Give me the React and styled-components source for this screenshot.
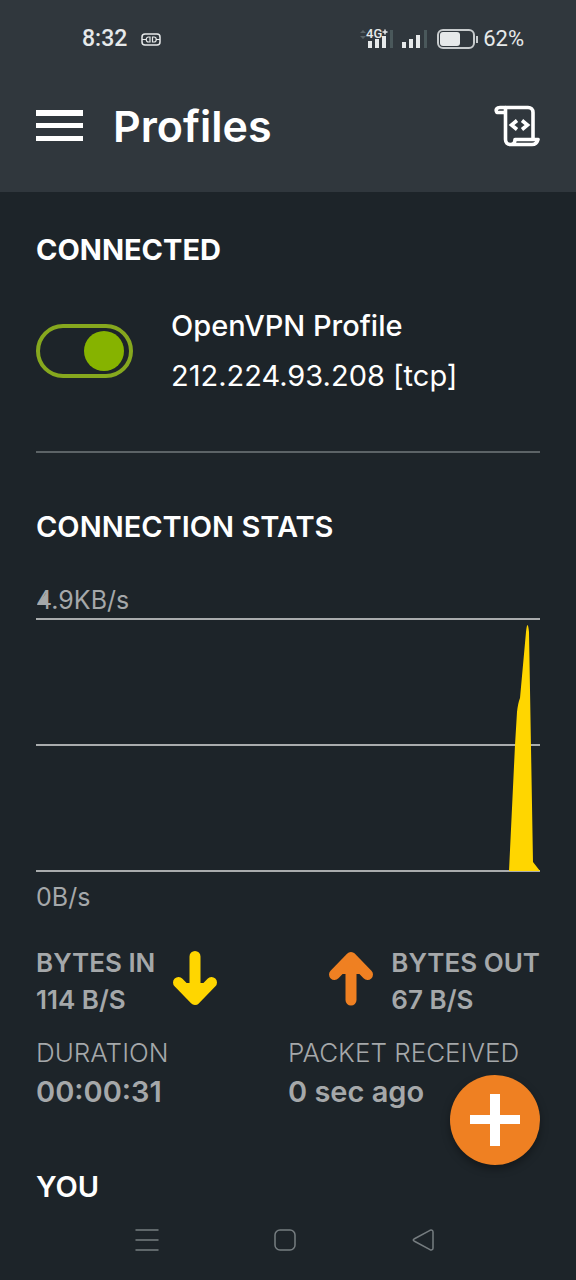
import React, { useState } from 'react';
import styled, { createGlobalStyle } from 'styled-components';

const GlobalStyle = createGlobalStyle`
    * {
        box-sizing: border-box;
    }

    body {
        margin: 0;
        background: #1d2429;
        font-family: Inter, 'Liberation Sans', sans-serif;
    }
`;

const Page = styled.div`
    position: relative;
    display: flex;
    flex-direction: column;
    min-height: 100vh;
    background: #1d2429;
    color: #ffffff;
`;

const Header = styled.header`
    background: #30373d;
    padding-bottom: 18px;
`;

const StatusBar = styled.div`
    display: flex;
    align-items: center;
    justify-content: space-between;
    height: 78px;
    padding: 0 52px 0 82px;
    color: #e6e9ea;
    font-family: Roboto, 'Liberation Sans', sans-serif;
    font-size: 22px;
    line-height: 28px;
`;

const StatusGroup = styled.div`
    display: flex;
    align-items: center;
    gap: ${props => props.$gap}px;
`;

const Time = styled.span`
    font-size: 23px;
    font-weight: 500;
`;

const SignalIcons = styled.svg`
    display: block;
    width: 120px;
    height: 28px;
`;

const AppBar = styled.div`
    display: flex;
    align-items: center;
    height: 96px;
    padding: 0 36px;
`;

const IconButton = styled.button`
    display: flex;
    padding: 0;
    border: none;
    background: none;
    color: inherit;
    cursor: pointer;
`;

const Title = styled.h1`
    flex: 1;
    margin: 0 0 0 30px;
    font-size: 43px;
    font-weight: 600;
    line-height: 52px;
`;

const Content = styled.main`
    padding: 40px 36px 0;
`;

const Heading = styled.h2`
    margin: 0;
    font-size: 29px;
    font-weight: ${props => props.$weight || 600};
    line-height: 36px;
`;

const Profile = styled.section`
    display: flex;
    align-items: center;
    gap: 38px;
    padding: 33px 0 50px;
    margin-bottom: 56px;
    border-bottom: 2px solid #5c6366;
`;

const Toggle = styled.input`
    appearance: none;
    display: flex;
    align-items: center;
    justify-content: ${props => (props.checked ? 'flex-end' : 'flex-start')};
    width: 97px;
    height: 54px;
    margin: 0;
    padding: 0 5px;
    border: 4px solid #86a81e;
    border-radius: 27px;
    cursor: pointer;

    &::before {
        content: '';
        width: 40px;
        height: 40px;
        border-radius: 50%;
        background: #86b300;
    }
`;

const ProfileLabel = styled.label`
    font-size: 29px;
    line-height: 50px;
`;

const ProfileName = styled.span`
    display: block;
    font-weight: 500;
`;

const AxisLabel = styled.div`
    position: relative;
    margin-top: ${props => props.$top || 0}px;
    color: #a5a8aa;
    font-size: 25px;
    line-height: 32px;
`;

const AxisMarker = styled.svg`
    position: absolute;
    left: 0;
    top: 6px;
    width: 14px;
    height: 18px;
`;

const Chart = styled.div`
    display: flex;
    margin: 2px 0 9px;
`;

const ChartArea = styled.svg`
    display: block;
    width: 100%;
    height: 254px;
`;

const Rates = styled.div`
    display: flex;
    justify-content: space-between;
    margin: 31px 0 15px;
`;

const Rate = styled.div`
    display: flex;
    align-items: center;
    gap: 18px;
    color: #a5a8aa;
    font-size: 26px;
    font-weight: 600;
    line-height: 37px;
`;

const Details = styled.dl`
    display: grid;
    grid-template-columns: 1fr 1fr;
    margin: 0 0 58px;
    color: #a5a8aa;
`;

const Term = styled.dt`
    font-size: 26px;
    font-weight: 300;
    line-height: 40px;
`;

const Value = styled.dd`
    margin: 0;
    font-size: 29px;
    font-weight: 600;
    line-height: 38px;
`;

const AddButton = styled.button`
    position: absolute;
    right: 36px;
    bottom: 115px;
    display: flex;
    align-items: center;
    justify-content: center;
    width: 90px;
    height: 90px;
    padding: 0;
    border: none;
    border-radius: 50%;
    background: #ef8022;
    box-shadow: 0 4px 8px rgba(0, 0, 0, 0.35);
    cursor: pointer;
`;

const NavBar = styled.nav`
    display: flex;
    align-items: center;
    justify-content: center;
    gap: 114px;
    height: 74px;
    margin-top: auto;
    padding: 0 6px 6px 0;
    color: #767d80;
`;

const VpnIcon = () => (
    <svg width="20" height="13" viewBox="0 0 20 13" fill="none" stroke="currentColor">
        <rect x="1" y="1" width="18" height="11" rx="3" strokeWidth="1.5" />
        <path d="M1 6.500h4M15 6.500h4M9 4H7.500C4.500 4 4.500 9 7.500 9H9zM11.500 4H13c3 0 3 5 0 5h-1.500z" strokeWidth="1.200" />
    </svg>
);

const ScrollIcon = () => (
    <svg width="46" height="42" viewBox="0 0 46 42" fill="none" stroke="currentColor" strokeWidth="3.600" strokeLinejoin="round">
        <path d="M11.500 2.500H34c3 0 5 2 5 5v26" />
        <path d="M11.500 2.500v32c0 3 2 5 5 5H38c3 0 5-1.500 6-5H21c0 3-1.500 5-4.500 5" />
        <path d="M11.500 7.500H3c-2-3 0-5 3-5h6" />
        <path d="M23 15.500L17.500 20l5.500 4.500M28 15.500l5.500 4.500-5.500 4.500" strokeWidth="3.600" strokeLinejoin="miter" />
    </svg>
);

const Arrow = ({ up, color }) => (
    <svg width="44" height="60" viewBox="0 0 44 60" fill="none" stroke={color} strokeWidth="11" strokeLinecap="round" strokeLinejoin="round">
        <path d={up ? 'M22 49V10M5.500 23.500L22 6.500l16.500 17' : 'M22 5.500V45M5.500 31.500L22 48.500l16.500-17'} />
        <path d={up ? 'M13 22l9-9 9 9z' : 'M13 33l9 9 9-9z'} fill={color} strokeWidth="2" />
    </svg>
);

const App = () => {
    const [connected, setConnected] = useState(true);

    return (
        <Page>
            <GlobalStyle />
            <Header>
                <StatusBar>
                    <StatusGroup $gap={14}>
                        <Time>8:32</Time>
                        <VpnIcon />
                    </StatusGroup>
                    <StatusGroup $gap={4}>
                        <SignalIcons viewBox="0 0 120 28">
                            <path d="M1 8l3-3 3 3zM1 11l3 3 3-3z" fill="#586266" />
                            <text x="7" y="13" fontSize="13" fontWeight="500" fill="#e6e9ea">4G</text>
                            <path d="M23.500 7h5M26 4.500v5" stroke="#e6e9ea" strokeWidth="1.500" />
                            <path d="M9 16h4v7H9zM16 14h4v9h-4zM23 11h4v12h-4zM43 17h4v6h-4zM50 14h4v9h-4zM57 10h4v13h-4z" fill="#e6e9ea" />
                            <path d="M31 5h3v18h-3zM65 5h3v18h-3z" fill="#4a585b" />
                            <rect x="79" y="5" width="36" height="18" rx="5" fill="none" stroke="#c7cbcd" strokeWidth="2" />
                            <rect x="81" y="7" width="20" height="14" rx="3" fill="#e6e9ea" />
                            <path d="M118 11v7" stroke="#c7cbcd" strokeWidth="2" />
                        </SignalIcons>
                        <span>62%</span>
                    </StatusGroup>
                </StatusBar>
                <AppBar>
                    <IconButton aria-label="Menu">
                        <svg width="47" height="32" viewBox="0 0 47 32" fill="currentColor">
                            <path d="M0 0h47v6H0zM0 13h47v5H0zM0 26h47v5H0z" />
                        </svg>
                    </IconButton>
                    <Title>Profiles</Title>
                    <IconButton aria-label="Log">
                        <ScrollIcon />
                    </IconButton>
                </AppBar>
            </Header>

            <Content>
                <Heading $weight={700}>CONNECTED</Heading>
                <Profile>
                    <Toggle
                        type="checkbox"
                        id="profile"
                        checked={connected}
                        onChange={() => setConnected(!connected)}
                    />
                    <ProfileLabel htmlFor="profile">
                        <ProfileName>OpenVPN Profile</ProfileName>
                        212.224.93.208 [tcp]
                    </ProfileLabel>
                </Profile>

                <Heading>CONNECTION STATS</Heading>
                <AxisLabel $top={39}>
                    4.9KB/s
                    <AxisMarker viewBox="0 0 14 18">
                        <path d="M1 15L11 2v13z" fill="#a5a8aa" />
                    </AxisMarker>
                </AxisLabel>
                <Chart>
                    <ChartArea viewBox="0 0 504 254" preserveAspectRatio="none">
                        <path d="M0 1h504M0 127h504M0 253h504" stroke="#a9acad" strokeWidth="2" />
                        <path d="M473 253L479 127L481 94Q482 85 484 80L490 14Q491.500 0 493 14L497 244L504 253z" fill="#ffd600" />
                    </ChartArea>
                </Chart>
                <AxisLabel>0B/s</AxisLabel>

                <Rates>
                    <Rate>
                        <div>
                            <div>BYTES IN</div>
                            <div>114 B/S</div>
                        </div>
                        <Arrow color="#ffd600" />
                    </Rate>
                    <Rate>
                        <Arrow up color="#ef8022" />
                        <div>
                            <div>BYTES OUT</div>
                            <div>67 B/S</div>
                        </div>
                    </Rate>
                </Rates>

                <Details>
                    <div>
                        <Term>DURATION</Term>
                        <Value>00:00:31</Value>
                    </div>
                    <div>
                        <Term>PACKET RECEIVED</Term>
                        <Value>0 sec ago</Value>
                    </div>
                </Details>

                <Heading>YOU</Heading>
            </Content>

            <AddButton aria-label="Add profile">
                <svg width="50" height="52" viewBox="0 0 50 52">
                    <path d="M20 0h10v21h20v9H30v22H20V30H0v-9h20z" fill="#ffffff" />
                </svg>
            </AddButton>

            <NavBar>
                <IconButton aria-label="Recent apps">
                    <svg width="24" height="24" viewBox="0 0 24 24" fill="none" stroke="currentColor" strokeWidth="1.500" strokeLinecap="round">
                        <path d="M1 2h22M1 12h22M1 22h22" />
                    </svg>
                </IconButton>
                <IconButton aria-label="Home">
                    <svg width="24" height="24" viewBox="0 0 24 24" fill="none" stroke="currentColor" strokeWidth="1.500">
                        <rect x="2" y="2" width="20" height="20" rx="5" />
                    </svg>
                </IconButton>
                <IconButton aria-label="Back">
                    <svg width="24" height="24" viewBox="0 0 24 24" fill="none" stroke="currentColor" strokeWidth="1.500" strokeLinejoin="round">
                        <path d="M3 11L19 2.300Q22 1.500 22 4v16Q22 22.500 19 21.700L3 13Q1.500 12 3 11z" />
                    </svg>
                </IconButton>
            </NavBar>
        </Page>
    );
};

export default App;
